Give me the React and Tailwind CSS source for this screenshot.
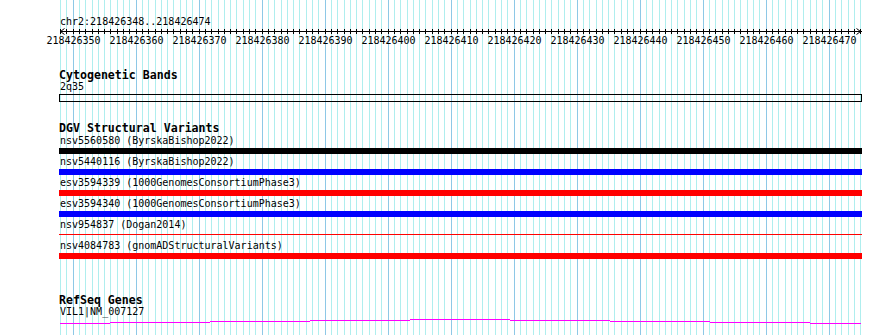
import React from "react";

const XS = Array.from({ length: 128 }, (_, i) => Math.round(60 + i * 6.3));
const START = 218426348;

function Grid() {
  return (
    <svg className="absolute inset-0" width="890" height="335" shapeRendering="crispEdges">
      {XS.map((x, i) => (
        <rect
          key={i}
          x={x}
          y={0}
          width={1}
          height={335}
          fill={(START + i) % 10 === 0 ? "#8ec8e6" : "#afeeee"}
        />
      ))}
    </svg>
  );
}

function Ruler() {
  return (
    <svg width="803" height="7" shapeRendering="crispEdges" className="block">
      <rect x={1} y={3} width={802} height={1} fill="#000" />
      {XS.map((x, i) => (
        <rect key={i} x={x - 59} y={1} width={1} height={5} fill="#000" />
      ))}
      <polyline points="5.5,0.5 1.5,3.5 5.5,6.5" fill="none" stroke="#000" strokeWidth="1" shapeRendering="auto" />
      <polyline points="797.5,0.5 801.5,3.5 797.5,6.5" fill="none" stroke="#000" strokeWidth="1" shapeRendering="auto" />
    </svg>
  );
}

function RulerLabels() {
  const labels = [];
  XS.forEach((x, i) => {
    if ((START + i) % 10 === 0) labels.push({ x, n: START + i });
  });
  return (
    <div className="relative h-[12px] text-[10px] leading-[12px]">
      {labels.map((l) => (
        <span
          key={l.n}
          className="absolute top-0 -translate-x-1/2 whitespace-nowrap"
          style={{ left: l.x - 59 + 0.5 }}
        >
          {l.n}
        </span>
      ))}
    </div>
  );
}

function Header({ children, className = "" }) {
  return (
    <div className={"h-[12px] text-[11.6px] leading-[12px] font-bold whitespace-nowrap " + className}>
      {children}
    </div>
  );
}

function Label({ children, className = "" }) {
  return (
    <div className={"h-[12px] text-[10px] leading-[12px] whitespace-nowrap pl-[1px] " + className}>
      {children}
    </div>
  );
}

function Feature({ label, color, thin }) {
  return (
    <div className="flex flex-col">
      <Label>{label}</Label>
      <div className="mt-[1px] h-[6px] mb-[2px]">
        {thin ? (
          <div className={"mt-[2px] h-[1px] " + color} />
        ) : (
          <div className={"h-[6px] " + color} />
        )}
      </div>
    </div>
  );
}

function GeneLine() {
  const segs = [
    [60, 110, 5],
    [110, 210, 4],
    [210, 310, 3],
    [310, 410, 2],
    [410, 510, 1],
    [510, 610, 2],
    [610, 710, 3],
    [710, 810, 4],
    [810, 861, 5],
  ];
  return (
    <svg width="803" height="7" shapeRendering="crispEdges" className="block">
      {segs.map(([a, b, y], i) => (
        <rect key={i} x={a - 59} y={y} width={b - a} height={1} fill="#ff00ff" />
      ))}
    </svg>
  );
}

export default function App() {
  return (
    <div className="relative w-[890px] h-[335px] bg-white overflow-hidden text-black font-['DejaVu_Sans_Mono',monospace]">
      <Grid />
      <div className="relative ml-[59px] w-[803px] flex flex-col">
        <div className="mt-[16px] h-[12px] text-[10px] leading-[12px] pl-[1px]">chr2:218426348..218426474</div>
        <Ruler />
        <RulerLabels />

        <Header className="mt-[22px]">Cytogenetic Bands</Header>
        <Label>2q35</Label>
        <div className="mt-[1px] h-[8px] border border-black" />

        <Header className="mt-[20px]">DGV Structural Variants</Header>
        <div className="mt-[1px] flex flex-col">
          <Feature label="nsv5560580 (ByrskaBishop2022)" color="bg-[#000000]" />
          <Feature label="nsv5440116 (ByrskaBishop2022)" color="bg-[#0000ff]" />
          <Feature label="esv3594339 (1000GenomesConsortiumPhase3)" color="bg-[#ff0000]" />
          <Feature label="esv3594340 (1000GenomesConsortiumPhase3)" color="bg-[#0000ff]" />
          <Feature label="nsv954837 (Dogan2014)" color="bg-[#ff0000]" thin />
          <Feature label="nsv4084783 (gnomADStructuralVariants)" color="bg-[#ff0000]" />
        </div>

        <Header className="mt-[33px]">RefSeq Genes</Header>
        <Label>VIL1|NM_007127</Label>
        <GeneLine />
      </div>
    </div>
  );
}
